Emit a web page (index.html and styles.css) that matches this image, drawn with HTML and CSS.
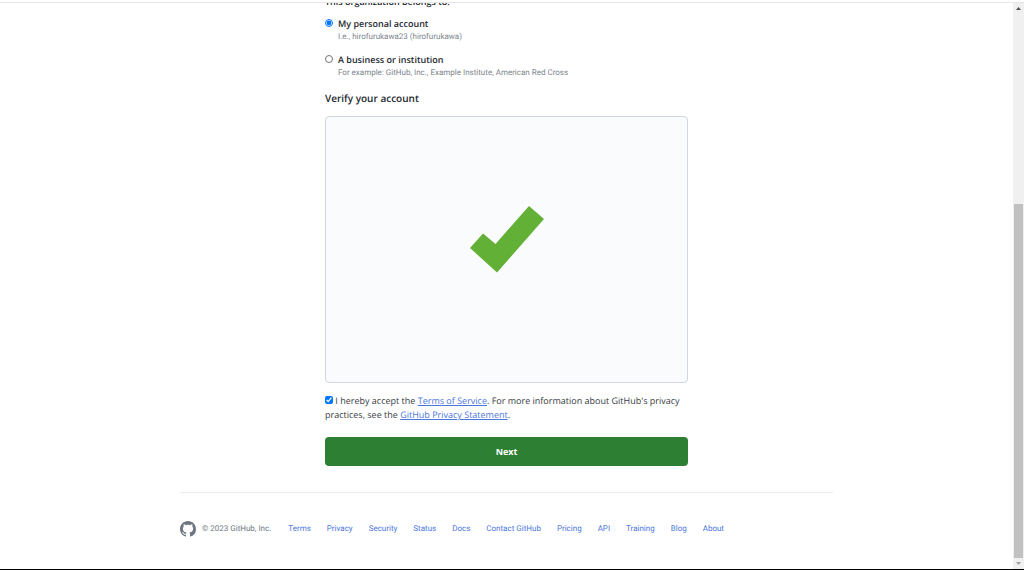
FILE: index.html
```html
<!DOCTYPE html>
<html lang="en">
  <head>
    <meta charset="utf-8">
    <title>Set up your organization</title>
    <link rel="stylesheet" href="styles.css">
  </head>
  <body>
    <div class="page">
      <div class="content">
        <form class="signup">
          <fieldset class="owner">
            <legend class="owner-title">This organization belongs to:</legend>
            <div class="option">
              <input type="radio" name="owner" id="personal" checked>
              <div>
                <label for="personal">My personal account</label>
                <p class="note">I.e., hirofurukawa23 (hirofurukawa)</p>
              </div>
            </div>
            <div class="option">
              <input type="radio" name="owner" id="business">
              <div>
                <label for="business">A business or institution</label>
                <p class="note">For example: GitHub, Inc., Example Institute, American Red Cross</p>
              </div>
            </div>
          </fieldset>

          <h2>Verify your account</h2>
          <div class="captcha">
            <svg class="tick" viewBox="0 0 74 67" role="img" aria-label="Verified">
              <path d="M0 42 13 27.500 25.500 38 59 0 74 13 27 66.500Z" fill="#62b036"/>
            </svg>
          </div>

          <p class="terms">
            <input type="checkbox" id="terms" checked>
            <label for="terms">I hereby accept the</label> <a href="#">Terms of Service</a>. For more information about GitHub's privacy practices, see the <a href="#">GitHub Privacy Statement</a>.
          </p>
          <button type="submit" class="next">Next</button>
        </form>

        <footer class="footer">
          <svg class="mark" viewBox="0 0 16 16" aria-hidden="true">
            <path fill="#6e7781" d="M8 0C3.580 0 0 3.580 0 8c0 3.540 2.290 6.530 5.470 7.590.4.070.55-.17.55-.38 0-.19-.01-.82-.01-1.490-2.010.37-2.530-.49-2.690-.94-.09-.23-.48-.94-.82-1.130-.28-.15-.68-.52-.01-.53.63-.01 1.080.58 1.230.82.72 1.210 1.870.87 2.330.66.070-.52.28-.87.51-1.070-1.780-.2-3.640-.89-3.640-3.950 0-.87.31-1.590.82-2.150-.08-.2-.36-1.020.080-2.120 0 0 .67-.21 2.200.82.64-.18 1.320-.27 2-.27s1.360.09 2 .27c1.530-1.040 2.200-.82 2.200-.82.44 1.100.16 1.920.080 2.120.51.56.82 1.270.82 2.150 0 3.070-1.870 3.750-3.650 3.950.29.25.54.73.54 1.480 0 1.070-.01 1.930-.01 2.200 0 .21.15.46.55.38A8.010 8.010 0 0 0 16 8c0-4.420-3.580-8-8-8z"/>
          </svg>
          <span class="copyright">© 2023 GitHub, Inc.</span>
          <nav class="links">
            <a href="#">Terms</a>
            <a href="#">Privacy</a>
            <a href="#">Security</a>
            <a href="#">Status</a>
            <a href="#">Docs</a>
            <a href="#">Contact GitHub</a>
            <a href="#">Pricing</a>
            <a href="#">API</a>
            <a href="#">Training</a>
            <a href="#">Blog</a>
            <a href="#">About</a>
          </nav>
        </footer>
      </div>

      <div class="scrollbar" aria-hidden="true">
        <svg class="arrow" viewBox="0 0 5 3"><path d="M0 3 2.500 0 5 3Z" fill="#505050"/></svg>
        <div class="track"><div class="thumb"></div></div>
        <svg class="arrow" viewBox="0 0 5 3"><path d="M0 0 2.500 3 5 0Z" fill="#a0a0a0"/></svg>
      </div>
    </div>
  </body>
</html>
```
FILE: styles.css
```css
* {
  box-sizing: border-box;
}

body {
  height: 100vh;
  margin: 0;
  padding-top: 2px;
  font-family: "Open Sans", sans-serif;
  font-size: 9px;
  line-height: 14px;
  text-rendering: geometricPrecision;
  color: #24292f;
  background: #fff;
}

a {
  color: #4c77e0;
}

.page {
  display: flex;
  height: 100%;
  border-top: 1px solid #e6e6e6;
  border-bottom: 1px solid #000;
}

/* scrolled to the end, so the content hangs from the bottom */
.content {
  flex: 1;
  display: flex;
  flex-direction: column;
  justify-content: flex-end;
  align-items: center;
  overflow: hidden;
}

.signup {
  width: 100%;
  max-width: 363px;
}

.owner {
  margin: 0;
  padding: 0;
  border: 0;
}

.owner-title {
  padding: 0;
  margin-bottom: 8px;
  font-weight: 600;
}

.option {
  display: flex;
  align-items: flex-start;
  gap: 5px;
  margin-bottom: 10px;
}

.option label {
  font-weight: 600;
}

input {
  width: 8px;
  height: 8px;
  margin: 2px 0 0;
}

.note {
  margin: 0;
  font-family: Roboto, sans-serif;
  font-size: 8px;
  line-height: 12px;
  color: #7d858d;
}

h2 {
  margin: 2px 0 11px;
  font-size: 10px;
  font-weight: 600;
  line-height: 14px;
}

.captcha {
  display: flex;
  align-items: center;
  justify-content: center;
  height: 267px;
  padding-bottom: 20px;
  border: 1px solid #d0d7de;
  border-radius: 4px;
  background: #fafbfd;
}

.tick {
  width: 74px;
  height: 67px;
}

.terms {
  margin: 11px 0 15px;
  color: #383d43;
}

.terms input {
  margin: 0;
}

.next {
  display: block;
  width: 100%;
  height: 29px;
  border: 0;
  border-radius: 4px;
  font: inherit;
  font-weight: 700;
  color: #fff;
  background: #2d7f33;
}

.footer {
  flex-shrink: 0;
  display: flex;
  align-items: center;
  width: 100%;
  max-width: 653px;
  height: 51px;
  margin: 26px 0;
  padding-top: 21px;
  border-top: 1px solid #eaecef;
  font-family: Roboto, sans-serif;
  font-size: 8px;
  color: #6e7781;
}

.mark {
  width: 16px;
  height: 16px;
  margin-right: 6px;
}

.links {
  display: flex;
  gap: 16px;
  margin-left: 17px;
}

.links a {
  text-decoration: none;
}

.scrollbar {
  display: flex;
  flex-direction: column;
  align-items: center;
  justify-content: space-between;
  width: 11px;
  padding: 4px 1px;
  background: #f0f0f0;
}

.arrow {
  width: 5px;
  height: 3px;
}

.track {
  flex: 1;
  display: flex;
  align-items: flex-end;
  width: 100%;
  padding: 4px 0;
}

.thumb {
  width: 100%;
  height: 65%;
  background: #c1c1c1;
}
```
